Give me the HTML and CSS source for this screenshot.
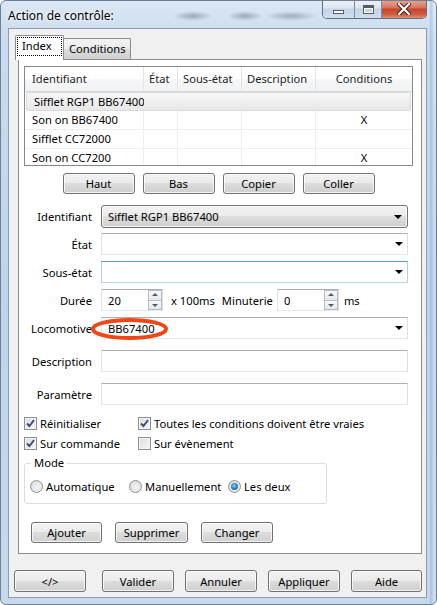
FILE: index.html
```html
<!DOCTYPE html>
<html lang="fr">
<head>
<meta charset="utf-8">
<title>Action de contrôle</title>
<link rel="stylesheet" href="styles.css">
</head>
<body>
<div class="window">
  <div class="titlebar">
    <span class="title">Action de contrôle:</span>
    <div class="caption-btns">
      <span class="cbtn cmin"><i class="min-glyph"></i></span>
      <span class="cbtn cmax"><i class="max-glyph"></i></span>
      <span class="cbtn cclose">
        <svg width="14" height="12" viewBox="0 0 14 12"><path d="M2 1 L12 11 M12 1 L2 11" stroke="#4a1a12" stroke-width="4.2" stroke-linecap="square"/><path d="M2 1 L12 11 M12 1 L2 11" stroke="#fff" stroke-width="2.2" stroke-linecap="square"/></svg>
      </span>
    </div>
  </div>

  <div class="client">
    <div class="tabs">
      <div class="tab active"><span class="focus">Index</span></div>
      <div class="tab">Conditions</div>
    </div>

    <div class="panel">
      <div class="list">
        <div class="lrow lhead">
          <span class="cell first">Identifiant</span>
          <span class="cell">État</span>
          <span class="cell">Sous-état</span>
          <span class="cell">Description</span>
          <span class="cell center">Conditions</span>
        </div>
        <div class="lrow sel">
          <span class="cell first">Sifflet RGP1 BB67400</span>
          <span class="cell"></span>
          <span class="cell"></span>
          <span class="cell"></span>
          <span class="cell center"></span>
        </div>
        <div class="lrow">
          <span class="cell first">Son on BB67400</span>
          <span class="cell"></span>
          <span class="cell"></span>
          <span class="cell"></span>
          <span class="cell center">X</span>
        </div>
        <div class="lrow">
          <span class="cell first">Sifflet CC72000</span>
          <span class="cell"></span>
          <span class="cell"></span>
          <span class="cell"></span>
          <span class="cell center"></span>
        </div>
        <div class="lrow">
          <span class="cell first">Son on CC7200</span>
          <span class="cell"></span>
          <span class="cell"></span>
          <span class="cell"></span>
          <span class="cell center">X</span>
        </div>
      </div>

      <div class="list-btns">
        <span class="btn w72">Haut</span>
        <span class="btn w72">Bas</span>
        <span class="btn w72">Copier</span>
        <span class="btn w72">Coller</span>
      </div>

      <div class="frow r-ident">
        <span class="flabel">Identifiant</span>
        <span class="combo-btn">Sifflet RGP1 BB67400<i class="arrow"></i></span>
      </div>
      <div class="frow r-etat">
        <span class="flabel">État</span>
        <span class="edit combo"><i class="arrow"></i></span>
      </div>
      <div class="frow r-sous">
        <span class="flabel">Sous-état</span>
        <span class="edit combo hover"><i class="arrow"></i></span>
      </div>
      <div class="frow r-duree">
        <span class="flabel">Durée</span>
        <span class="edit spin">20<span class="spin-arrows"><i class="up"></i><i class="down"></i></span></span>
        <span class="unit">x 100ms</span>
        <span class="minut">Minuterie</span>
        <span class="edit spin">0<span class="spin-arrows"><i class="up"></i><i class="down"></i></span></span>
        <span class="unit ms">ms</span>
      </div>
      <div class="frow r-loco">
        <span class="flabel">Locomotive</span>
        <span class="edit combo">BB67400<i class="arrow"></i></span>
      </div>
      <div class="frow r-desc">
        <span class="flabel">Description</span>
        <span class="edit"></span>
      </div>
      <div class="frow r-param">
        <span class="flabel">Paramètre</span>
        <span class="edit"></span>
      </div>

      <div class="checks">
        <span class="chk"><i class="box on"><svg width="9" height="9" viewBox="0 0 9 9"><path d="M1 4.5 L3.4 7 L8 1.2" fill="none" stroke="#3a4f7d" stroke-width="1.9"/></svg></i>Réinitialiser</span>
        <span class="chk"><i class="box on"><svg width="9" height="9" viewBox="0 0 9 9"><path d="M1 4.5 L3.4 7 L8 1.2" fill="none" stroke="#3a4f7d" stroke-width="1.9"/></svg></i>Toutes les conditions doivent être vraies</span>
        <span class="chk"><i class="box on"><svg width="9" height="9" viewBox="0 0 9 9"><path d="M1 4.5 L3.4 7 L8 1.2" fill="none" stroke="#3a4f7d" stroke-width="1.9"/></svg></i>Sur commande</span>
        <span class="chk"><i class="box"></i>Sur évènement</span>
      </div>

      <fieldset class="group">
        <legend>Mode</legend>
        <span class="radio"><i class="rb"></i>Automatique</span>
        <span class="radio"><i class="rb"></i>Manuellement</span>
        <span class="radio"><i class="rb on"></i>Les deux</span>
      </fieldset>

      <div class="action-btns">
        <span class="btn w71">Ajouter</span>
        <span class="btn w73">Supprimer</span>
        <span class="btn w72">Changer</span>
      </div>
    </div>

    <div class="bottom-btns">
      <span class="btn b">&lt;/&gt;</span>
      <span class="btn b">Valider</span>
      <span class="btn b">Annuler</span>
      <span class="btn b">Appliquer</span>
      <span class="btn b aide">Aide</span>
    </div>
  </div>

  <svg class="mark" width="81" height="26" viewBox="0 0 81 26"><ellipse cx="40.5" cy="13" rx="36.5" ry="9" fill="none" stroke="#ee4816" stroke-width="4"/></svg>
</div>
</body>
</html>
```

FILE: styles.css
```css
* { box-sizing: border-box; }

html, body {
  margin: 0;
  padding: 0;
  background: #ffffff;
}

body {
  font-family: "Noto Sans", "Open Sans", sans-serif;
  font-size: 11.2px;
  color: #000;
}

.window {
  position: relative;
  width: 437px;
  height: 605px;
  border: 1px solid #6f8095;
  border-radius: 6px;
  background:
    linear-gradient(90deg, rgba(255,255,255,0) 0, rgba(255,255,255,0) 428px, rgba(90,130,190,.25) 430px, rgba(255,255,255,.15) 433px),
    linear-gradient(180deg, #dbe7f4 0, #c9dbee 40px, #bfd3ea 300px, #c6d8ec 605px);
  display: flex;
  flex-direction: column;
  overflow: hidden;
}

/* ---------- title bar ---------- */
.titlebar {
  height: 27px;
  display: flex;
  align-items: flex-start;
  padding-left: 7px;
  background:
    radial-gradient(ellipse 20px 5px at 192px 15px, rgba(110,120,135,.55), rgba(110,120,135,0)),
    radial-gradient(ellipse 18px 5px at 244px 15px, rgba(110,120,135,.55), rgba(110,120,135,0)),
    radial-gradient(ellipse 26px 5px at 290px 15px, rgba(110,120,135,.5), rgba(110,120,135,0));
}

.title {
  margin-top: 7px;
  font-size: 12px;
  line-height: 16px;
  text-shadow: 0 0 6px #fff, 0 0 3px #fff;
}

.caption-btns {
  margin-left: auto;
  margin-right: 9px;
  display: flex;
  height: 19px;
  margin-top: -1px;
  border: 1px solid #5f6f84;
  border-top: none;
  border-radius: 0 0 5px 5px;
  overflow: hidden;
}

.cbtn {
  height: 18px;
  display: flex;
  align-items: center;
  justify-content: center;
}

.cmin, .cmax {
  background: linear-gradient(180deg, #eef3f9 0, #dbe5f0 45%, #c5d4e4 50%, #cfdeee 100%);
  border-right: 1px solid #7d8ca0;
}
.cmin { width: 32px; }
.cmax { width: 27px; }

.min-glyph {
  display: block;
  width: 11px;
  height: 4px;
  margin-top: 6px;
  background: #fff;
  border: 1px solid #4e5c6e;
}
.max-glyph {
  display: block;
  width: 11px;
  height: 9px;
  border: 1px solid #4e5c6e;
  border-top-width: 3px;
  background: transparent;
  box-shadow: inset 0 0 0 1px #fff;
}

.cclose {
  width: 44px;
  background: linear-gradient(180deg, #e6a597 0, #d97a63 40%, #c6452b 52%, #cf5c40 80%, #dd8f73 100%);
}

/* ---------- client ---------- */
.client {
  margin-left: 7px;
  width: 419px;
  height: 570px;
  border: 1px solid #8a9cb1;
  background: #f0f0f0;
  padding: 6px 4px 0 9px;
}

.tabs {
  display: flex;
  align-items: flex-end;
  height: 24px;
  margin-left: -3px;
  position: relative;
  z-index: 2;
}

.tab {
  height: 21px;
  border: 1px solid #898c95;
  border-bottom: none;
  border-radius: 2px 2px 0 0;
  background: linear-gradient(180deg, #f3f3f3 0, #ebebeb 50%, #dddddd 51%, #cfcfcf 100%);
  padding: 0 5px;
  line-height: 20px;
  width: 68px;
  margin-left: -1px;
}

.tab.active {
  height: 25px;
  width: 49px;
  margin-left: 0;
  margin-bottom: -1px;
  background: #fff;
  padding: 1px 1px 3px 1px;
  position: relative;
  z-index: 3;
}

.focus {
  display: block;
  height: 19px;
  border: 1px dotted #000;
  padding-left: 4px;
  line-height: 16px;
}

.panel {
  width: 404px;
  height: 495px;
  border: 1px solid #898c95;
  background: #fff;
  padding: 6px 8px 0 5px;
  position: relative;
}

/* ---------- list ---------- */
.list {
  height: 100px;
  border: 1px solid #828790;
  overflow: hidden;
  background: #fff;
}

.lrow {
  display: grid;
  grid-template-columns: 119px 34px 64px 74px 1fr;
  height: 19px;
  border-bottom: 1px solid #eeeeee;
}

.cell {
  border-right: 1px solid #eeeeee;
  padding-left: 5px;
  line-height: 18px;
  white-space: nowrap;
  overflow: hidden;
}
.cell:last-child { border-right: none; }
.cell.first { padding-left: 7px; }
.cell.center { text-align: center; padding-left: 0; }

.lhead {
  height: 25px;
  background: linear-gradient(180deg, #ffffff 0, #ffffff 50%, #f6f7f8 51%, #f1f2f4 100%);
  border-bottom: 1px solid #d5d5d5;
}
.lhead .cell {
  line-height: 24px;
  border-right: 1px solid #e3e5e8;
  color: #1e1e1e;
}
.lhead .cell:last-child { border-right: none; }

.lrow.sel {
  background: linear-gradient(180deg, #f6f6f6 0, #e8e8e8 100%);
  border: 1px solid #dadada;
  border-radius: 2px;
  margin: 0 1px;
  height: 19px;
  grid-template-columns: 118px 34px 64px 74px 1fr;
}
.lrow.sel .cell { border-right-color: transparent; line-height: 17px; }

/* ---------- buttons ---------- */
.btn {
  display: flex;
  align-items: center;
  justify-content: center;
  height: 21px;
  border: 1px solid #707070;
  border-radius: 3px;
  background: linear-gradient(180deg, #f2f2f2 0, #ebebeb 49%, #dddddd 50%, #cfcfcf 100%);
  box-shadow: inset 0 0 0 1px rgba(255,255,255,.75);
  white-space: nowrap;
}
.w71 { width: 71px; }
.w72 { width: 72px; }
.w73 { width: 73px; }

.list-btns {
  display: flex;
  justify-content: center;
  gap: 8px;
  width: 389px;
  margin-top: 7px;
}

/* ---------- form rows ---------- */
.frow {
  display: flex;
  align-items: center;
  height: 22px;
}
.flabel {
  width: 68px;
  text-align: right;
  margin-right: 9px;
  white-space: nowrap;
}
.r-ident { margin-top: 11px; height: 23px; }
.r-etat { margin-top: 5px; }
.r-sous { margin-top: 6px; }
.r-duree { margin-top: 6px; height: 22px; }
.r-loco { margin-top: 6px; }
.r-desc { margin-top: 11px; }
.r-param { margin-top: 11px; }

.edit {
  width: 307px;
  height: 100%;
  background: #fff;
  border: 1px solid;
  border-color: #abadb3 #dbdfe6 #e3e9ef #e2e3ea;
  display: flex;
  align-items: center;
  padding-left: 6px;
  position: relative;
}
.edit.hover {
  border-color: #5e9cc6 #b5d0e6 #b7d5ea #b5d0e6;
}

.combo-btn {
  width: 307px;
  height: 100%;
  border: 1px solid #707070;
  border-radius: 3px;
  background: linear-gradient(180deg, #f2f2f2 0, #ebebeb 49%, #dddddd 50%, #cfcfcf 100%);
  box-shadow: inset 0 0 0 1px rgba(255,255,255,.75);
  display: flex;
  align-items: center;
  padding-left: 6px;
  position: relative;
}

.arrow {
  position: absolute;
  right: 4px;
  top: 50%;
  margin-top: -2px;
  width: 0;
  height: 0;
  border-left: 4px solid transparent;
  border-right: 4px solid transparent;
  border-top: 4px solid #000;
}
.combo-btn .arrow { right: 5px; }

.spin {
  width: 62px;
  padding-left: 6px;
}
.spin-arrows {
  position: absolute;
  right: 0;
  top: 0;
  bottom: 0;
  width: 14px;
  display: flex;
  flex-direction: column;
}
.spin-arrows i {
  flex: 1;
  border: 1px solid #b8bdc4;
  background: linear-gradient(180deg, #f6f8fa 0, #e3e8ee 100%);
  position: relative;
}
.spin-arrows i.down { border-top: none; }
.spin-arrows i::after {
  content: "";
  position: absolute;
  left: 50%;
  top: 50%;
  margin-left: -3px;
  width: 0;
  height: 0;
  border-left: 3px solid transparent;
  border-right: 3px solid transparent;
}
.spin-arrows i.up::after {
  margin-top: -2px;
  border-bottom: 3px solid #4d5a6a;
}
.spin-arrows i.down::after {
  margin-top: -1px;
  border-top: 3px solid #4d5a6a;
}

.unit { margin-left: 8px; }
.minut { margin-left: 7px; margin-right: 4px; }
.unit.ms { margin-left: 5px; }

/* ---------- checkboxes ---------- */
.checks {
  display: grid;
  grid-template-columns: 114px auto;
  grid-auto-rows: 16px;
  row-gap: 4px;
  margin-top: 10px;
}
.chk {
  display: flex;
  align-items: center;
  white-space: nowrap;
}
.box {
  width: 13px;
  height: 13px;
  border: 1px solid #8e8f8f;
  background: linear-gradient(135deg, #dcdcdc 0, #f7f7f7 100%);
  box-shadow: inset 0 0 0 1px #f4f4f4;
  margin-right: 3px;
  display: flex;
  align-items: center;
  justify-content: center;
  flex: none;
}

/* ---------- group ---------- */
.group {
  margin: 4px 0 0 0;
  width: 303px;
  height: 49px;
  border: 1px solid #d5dfe5;
  border-radius: 3px;
  padding: 0 0 0 5px;
  display: grid;
  grid-template-columns: 99px 99px auto;
  align-items: center;
}
.group legend {
  padding: 0 3px;
  margin-left: 1px;
  line-height: 16px;
}
.radio {
  display: flex;
  align-items: center;
  white-space: nowrap;
  margin-top: -2px;
}
.rb {
  width: 13px;
  height: 13px;
  border-radius: 50%;
  border: 1px solid #8e8f8f;
  background: radial-gradient(circle at 60% 60%, #f4f4f4 0, #d6d6d6 100%);
  margin-right: 3px;
  flex: none;
  position: relative;
}
.rb.on::after {
  content: "";
  position: absolute;
  left: 2px;
  top: 2px;
  width: 7px;
  height: 7px;
  border-radius: 50%;
  background: radial-gradient(circle at 45% 40%, #8fd6f2 0, #2c8cc4 45%, #0f4b78 100%);
}

.action-btns {
  display: flex;
  gap: 13px;
  margin-top: 18px;
  padding-left: 7px;
}

/* ---------- bottom ---------- */
.bottom-btns {
  display: flex;
  margin-top: 16px;
  margin-left: -4px;
}
.btn.b { width: 72px; height: 22px; margin-left: 11px; }
.btn.b:first-child { margin-left: 0; }
.btn.b:nth-child(2) { margin-left: 16px; }
.btn.b.aide { width: 71px; }

/* ---------- overlay annotation ---------- */
.mark {
  position: absolute;
  left: 88px;
  top: 315px;
}
```
